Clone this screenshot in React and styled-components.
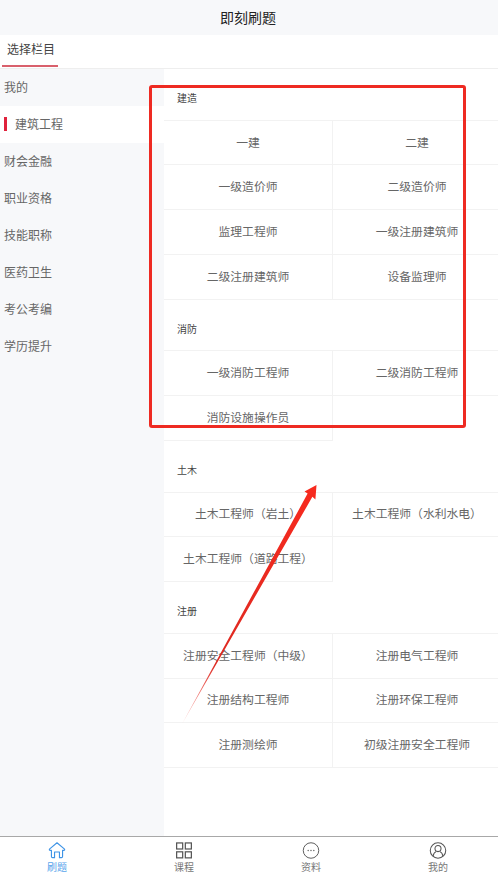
import React from "react";
import styled, { createGlobalStyle } from "styled-components";

const GlobalStyle = createGlobalStyle`
  html, body {
    margin: 0;
    padding: 0;
    background: #fff;
    font-family: "Noto Sans CJK SC", "Liberation Sans", sans-serif;
  }
  * {
    box-sizing: border-box;
  }
`;

const Page = styled.div`
  position: relative;
  width: 498px;
  height: 874px;
  display: flex;
  flex-direction: column;
  overflow: hidden;
`;

const Header = styled.header`
  height: 35px;
  flex: none;
  display: flex;
  align-items: center;
  justify-content: center;
  padding: 0 2px 2px 0;
  background: #f7f8fa;
  color: #222;
  font-size: 14px;
`;

const TabBar = styled.div`
  height: 34px;
  flex: none;
  border-bottom: 1px solid #eee;
`;

const Tab = styled.div`
  width: 56px;
  height: 32px;
  margin-left: 2px;
  padding-left: 5px;
  line-height: 27px;
  font-size: 12px;
  color: #444;
  border-bottom: 2px solid #d9606c;
`;

const Body = styled.div`
  flex: 1;
  min-height: 0;
  display: flex;
`;

const Sidebar = styled.aside`
  width: 164px;
  flex: none;
  background: #f7f8fa;
`;

const SideItem = styled.div`
  height: 37px;
  display: flex;
  align-items: center;
  padding-left: 4px;
  padding-bottom: 2px;
  font-size: 12px;
  color: #666;
  background: ${({ $active }) => ($active ? "#fff" : "transparent")};
`;

const Marker = styled.i`
  width: 3px;
  height: 14px;
  margin-right: 8px;
  background: #e0223c;
`;

const Content = styled.main`
  flex: 1;
  min-width: 0;
`;

const SectionTitle = styled.div`
  height: 51.7px;
  padding: 20px 0 0 13px;
  font-size: 10px;
  line-height: 17px;
  color: #444;
  border-bottom: 1px solid #f2f2f2;
`;

const Grid = styled.div`
  display: grid;
  grid-template-columns: 169px 165px;
  grid-auto-rows: 44.75px;
`;

const Cell = styled.div`
  display: flex;
  align-items: center;
  justify-content: center;
  font-size: 11.8px;
  color: #666;
  padding-left: ${({ $right }) => ($right ? "3px" : "0")};
  padding-bottom: 3px;
  border-bottom: 1px solid #f2f2f2;
  border-right: ${({ $right }) => ($right ? "0" : "1px solid #f2f2f2")};
`;

const BottomNav = styled.nav`
  height: 38px;
  flex: none;
  display: flex;
  gap: 91px;
  padding-left: 39px;
  background: #fff;
  border-top: 1px solid #a8a8a8;
`;

const NavItem = styled.div`
  width: 36px;
  display: flex;
  flex-direction: column;
  align-items: center;
  padding-top: 5px;
  font-size: 10px;
  line-height: 14px;
  color: ${({ $active }) => ($active ? "#5aa5ec" : "#777")};

  svg {
    display: block;
    margin-bottom: 1px;
  }
`;

const Highlight = styled.div`
  position: absolute;
  left: 149px;
  top: 85px;
  width: 317px;
  height: 343px;
  border: 3px solid #ee2a22;
  border-radius: 3px;
  pointer-events: none;
`;

const Arrow = styled.svg`
  position: absolute;
  left: 170px;
  top: 480px;
  pointer-events: none;
`;

const sections = [
  {
    title: "建造",
    items: [
      "一建",
      "二建",
      "一级造价师",
      "二级造价师",
      "监理工程师",
      "一级注册建筑师",
      "二级注册建筑师",
      "设备监理师",
    ],
  },
  {
    title: "消防",
    items: ["一级消防工程师", "二级消防工程师", "消防设施操作员"],
  },
  {
    title: "土木",
    items: ["土木工程师（岩土）", "土木工程师（水利水电）", "土木工程师（道路工程）"],
  },
  {
    title: "注册",
    items: [
      "注册安全工程师（中级）",
      "注册电气工程师",
      "注册结构工程师",
      "注册环保工程师",
      "注册测绘师",
      "初级注册安全工程师",
    ],
  },
];

const menu = ["我的", "建筑工程", "财会金融", "职业资格", "技能职称", "医药卫生", "考公考编", "学历提升"];

const HomeIcon = () => (
  <svg width="18" height="18" viewBox="0 0 18 18" fill="none" stroke="#3f94e6" strokeWidth="1.2" strokeLinejoin="round">
    <path d="M9 0.8 L17 7.6 Q17.4 8.6 16.4 8.8 L14.9 8.8 L14.9 15.4 Q14.9 16.6 13.7 16.6 L11.6 16.6 L11.6 10.6 L6.4 10.6 L6.4 16.6 L4.3 16.6 Q3.1 16.6 3.1 15.4 L3.1 8.8 L1.6 8.8 Q0.6 8.6 1 7.6 Z" />
  </svg>
);

const GridIcon = () => (
  <svg width="18" height="18" viewBox="0 0 18 18" fill="none" stroke="#555" strokeWidth="1.3">
    <rect x="1.2" y="1" width="6.4" height="6.4" />
    <rect x="10.4" y="1" width="6.4" height="6.4" />
    <rect x="1.2" y="10.4" width="6.4" height="6.4" />
    <rect x="10.4" y="10.4" width="6.4" height="6.4" />
  </svg>
);

const DotsIcon = () => (
  <svg width="18" height="18" viewBox="0 0 18 18" fill="none" stroke="#555" strokeWidth="1">
    <circle cx="9" cy="9" r="8.2" />
    <g fill="#555" stroke="none">
      <circle cx="6" cy="9" r="0.7" />
      <circle cx="9" cy="9" r="0.7" />
      <circle cx="12" cy="9" r="0.7" />
    </g>
  </svg>
);

const UserIcon = () => (
  <svg width="18" height="18" viewBox="0 0 18 18" fill="none" stroke="#555" strokeWidth="1.1">
    <circle cx="9" cy="9" r="8.2" />
    <circle cx="9" cy="7" r="3.2" />
    <path d="M3.8 15 C4.2 12.2 6 10.6 7 10.2 M14.2 15 C13.8 12.2 12 10.6 11 10.2" />
  </svg>
);

const tabs = [
  { label: "刷题", icon: <HomeIcon />, active: true },
  { label: "课程", icon: <GridIcon /> },
  { label: "资料", icon: <DotsIcon /> },
  { label: "我的", icon: <UserIcon /> },
];

const App = () => (
  <Page>
    <GlobalStyle />
    <Header>即刻刷题</Header>
    <TabBar>
      <Tab>选择栏目</Tab>
    </TabBar>
    <Body>
      <Sidebar>
        {menu.map((name) => (
          <SideItem key={name} $active={name === "建筑工程"}>
            {name === "建筑工程" && <Marker />}
            {name}
          </SideItem>
        ))}
      </Sidebar>
      <Content>
        {sections.map((section) => (
          <section key={section.title}>
            <SectionTitle>{section.title}</SectionTitle>
            <Grid>
              {section.items.map((item, i) => (
                <Cell key={item} $right={i % 2 === 1}>
                  {item}
                </Cell>
              ))}
            </Grid>
          </section>
        ))}
      </Content>
    </Body>
    <BottomNav>
      {tabs.map((tab) => (
        <NavItem key={tab.label} $active={tab.active}>
          {tab.icon}
          {tab.label}
        </NavItem>
      ))}
    </BottomNav>
    <Highlight />
    <Arrow width="150" height="250" viewBox="0 0 150 250">
      <defs>
        <linearGradient id="tail" gradientUnits="userSpaceOnUse" x1="12" y1="244" x2="146" y2="5">
          <stop offset="0" stopColor="#ee2a22" stopOpacity="0.25" />
          <stop offset="0.25" stopColor="#dd2a22" />
          <stop offset="1" stopColor="#f82a1e" />
        </linearGradient>
      </defs>
      <path d="M12 244 L137.6 13.6 L134.5 11.6 L146.5 5 L145.4 19.4 L142.4 16.8 Z" fill="url(#tail)" />
    </Arrow>
  </Page>
);

export default App;
